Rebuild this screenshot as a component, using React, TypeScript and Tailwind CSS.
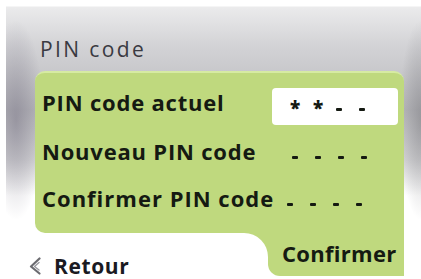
import React from "react";

const Dash = () => (
  <span className="w-[23px] inline-flex justify-start">
    <span className="inline-block w-[6px] h-[3px] bg-[#151a12] rounded-[1px]" />
  </span>
);

const Star = () => (
  <span className="w-[23px] inline-flex justify-start text-[19px] font-extrabold leading-none text-[#151a12] translate-y-[-1px]">
    *
  </span>
);

export default function App() {
  return (
    <div
      className="w-[421px] h-[279px] overflow-hidden flex flex-col bg-white [background-image:linear-gradient(to_right,#fff_0,#fff_6px,transparent_6px),radial-gradient(ellipse_28px_100px_at_16px_120px,rgba(105,100,120,0.45),transparent),radial-gradient(ellipse_22px_100px_at_421px_120px,rgba(110,110,115,0.45),transparent),linear-gradient(to_bottom,#fff_0,#fff_6px,#ebebec_7px,#d3d3d6_45px,#b9b9bd_110px,#d6d6d8_160px,#fff_196px)]"
      style={{ fontFamily: '"Open Sans", "DejaVu Sans", sans-serif' }}
    >
      <div className="pt-[39px] pl-[40px] text-[21px] leading-none text-[#3a3a42] tracking-[2.4px]">
        PIN code
      </div>

      <div className="mt-[11px] ml-[35px] w-[369px] h-[162px] bg-[#bfd97e] rounded-t-[10px] rounded-bl-[10px] border-t-2 border-[#d6eba2] flex flex-col text-[#151a12]">
        <div className="mt-[15px] flex items-start">
          <div className="pl-[7px] mt-[3px] text-[22px] font-bold leading-none tracking-[0.8px] w-[237px]">
            PIN code actuel
          </div>
          <div className="w-[126px] h-[37px] bg-white rounded-[4px] flex items-center pl-[18px] pt-[6px]">
            <Star />
            <Star />
            <Dash />
            <Dash />
          </div>
        </div>

        <div className="mt-[15px] flex items-start">
          <div className="pl-[7px] text-[22px] font-bold leading-none tracking-[0.8px] w-[257px]">
            Nouveau PIN code
          </div>
          <div className="flex items-center pt-[16px]">
            <Dash />
            <Dash />
            <Dash />
            <Dash />
          </div>
        </div>

        <div className="mt-[25px] flex items-start">
          <div className="pl-[7px] text-[22px] font-bold leading-none tracking-[1px] w-[252px]">
            Confirmer PIN code
          </div>
          <div className="flex items-center pt-[16px]">
            <Dash />
            <Dash />
            <Dash />
            <Dash />
          </div>
        </div>
      </div>

      <div className="mr-[17px] flex flex-1 bg-[linear-gradient(to_bottom,#bfd97e_0,#bfd97e_24px,transparent_24px)]">
        <div className="flex-1 bg-white rounded-tr-[24px] flex items-start pl-[29px] pt-[23px]">
          <svg width="12" height="18" viewBox="0 0 12 18" className="mt-[1px]">
            <path d="M10.5 1.5 L2 9.5 L10.5 16.5" fill="none" stroke="#6b6b70" strokeWidth="2.2" strokeLinejoin="round" strokeLinecap="round" />
            <path d="M10 5.5 L5.5 9.5 L10 13" fill="none" stroke="#9a9aa0" strokeWidth="1.4" strokeLinejoin="round" strokeLinecap="round" />
          </svg>
          <span className="ml-[13px] text-[21px] font-bold leading-none tracking-[0.6px] text-[#1a1a22]">
            Retour
          </span>
        </div>
        <div className="w-[136px] h-[43px] bg-[#bfd97e] rounded-bl-[12px] pl-[14px] pt-[9px]">
          <span className="text-[22px] font-bold leading-none tracking-[0.3px] text-[#151a12]">
            Confirmer
          </span>
        </div>
      </div>
    </div>
  );
}
